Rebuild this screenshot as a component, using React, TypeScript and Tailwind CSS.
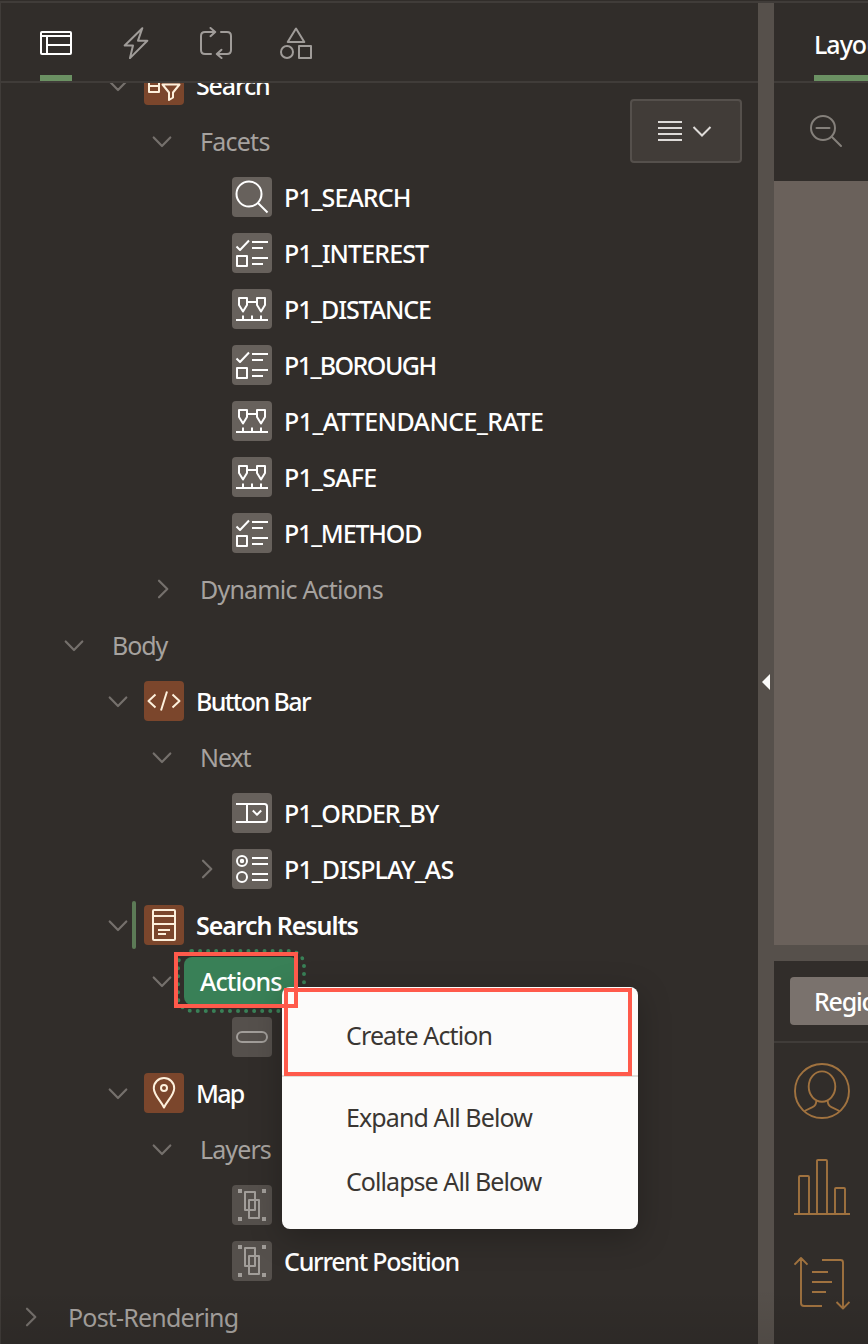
import type { ReactNode } from 'react';
import clsx from 'clsx';

type IconName =
  | 'faceted' | 'search' | 'checklist' | 'range' | 'html' | 'select'
  | 'radio' | 'report' | 'pin' | 'button' | 'layer';

const glyphs: Record<IconName, ReactNode> = {
  faceted: (
    <>
      <path d="M5 9h10v18H5zM5 15h10M5 21h10" />
      <path d="M18.5 19.5h17L29 27.5v5l-4 2.5v-7.5z" />
    </>
  ),
  search: (
    <>
      <circle cx="17" cy="17" r="12.5" />
      <path d="M26 26l9.5 9.5" />
    </>
  ),
  checklist: (
    <>
      <path d="M4.5 13.5L8 17l9-9.5" />
      <path d="M20 9h16M20 15h11M20 25h16M20 31h11M5 23h10v10H5z" />
    </>
  ),
  range: (
    <>
      <path d="M7 9h8v7l-4 6.500-4-6.500zM25 9h8v7l-4 6.500-4-6.500zM15 13h10" />
      <path d="M4 31h32M11 26.500v4.500M20 26.500v4.500M29 26.500v4.500" />
    </>
  ),
  html: <path d="M11.500 13.500L4.500 20l7 6.500M23 10.500l-6 19M28.500 13.500l7 6.500-7 6.500" />,
  select: (
    <>
      <path d="M4 11h28.500q2.500 0 2.500 2.500v13q0 2.500-2.500 2.500H4M15 11v18" />
      <path d="M20.800 17.500l4.200 4.200 4.200-4.200" />
    </>
  ),
  radio: (
    <>
      <circle cx="10" cy="12" r="5" />
      <circle cx="10" cy="12" r="1.200" />
      <circle cx="10" cy="28" r="5" />
      <path d="M20 9h16M20 15h16M20 25h16M20 31h16" />
    </>
  ),
  report: (
    <>
      <rect x="9" y="5" width="22" height="30" rx="1" />
      <path d="M9 11h22M9 19h22M14 25h12M14 29h8" />
    </>
  ),
  pin: (
    <>
      <path d="M20 34.500C17 28 9.800 22 9.800 15.200a10.200 10.200 0 0 1 20.400 0C30.200 22 23 28 20 34.500z" />
      <circle cx="20" cy="15" r="3" />
    </>
  ),
  button: <rect x="5" y="15" width="30" height="10" rx="5" />,
  layer: (
    <>
      <path d="M13 7h10v18H13zM17 15h10v18H17z" />
      <path d="M6 4h4v4H6zM30 4h4v4h-4zM6 32h4v4H6zM30 32h4v4h-4z" fill="currentColor" stroke="none" />
    </>
  ),
};

const tones = {
  region: 'bg-[#7b462c] text-[#fdf0dc]',
  item: 'bg-[#67615c] text-white',
  muted: 'bg-[#55504c] text-[#a19d99]',
};

function Tile({ icon, tone }: { icon: IconName; tone: keyof typeof tones }) {
  return (
    <span className={clsx('size-10 shrink-0 rounded-[4px]', tones[tone])}>
      <svg viewBox="0 0 40 40" className="size-10" fill="none" stroke="currentColor" strokeWidth="2" strokeLinecap="butt" strokeLinejoin="round">
        {glyphs[icon]}
      </svg>
    </span>
  );
}

function Chevron({ open }: { open?: boolean }) {
  return (
    <svg viewBox="0 0 24 24" className="size-6 shrink-0" fill="none" stroke="#75706c" strokeWidth="2.200" strokeLinecap="round" strokeLinejoin="round">
      {open ? <path d="M3.700 8.500l8.300 8.500 8.300-8.500" /> : <path d="M9 3.700l8.300 8.300L9 20.300" />}
    </svg>
  );
}

type Node = {
  label: string;
  indent: string;
  chevron?: 'open' | 'closed';
  icon?: IconName;
  tone?: keyof typeof tones;
  style: string;
  current?: boolean;
};

const item = 'font-medium text-white';
const group = 'text-[#a6a29f]';

const before: Node[] = [
  { label: 'Search', indent: 'pl-[105px]', chevron: 'open', icon: 'faceted', tone: 'region', style: 'font-medium text-white tracking-[-1.15px]' },
  { label: 'Facets', indent: 'pl-[149px]', chevron: 'open', style: `${group} tracking-[-0.75px]` },
  { label: 'P1_SEARCH', indent: 'pl-[193px]', icon: 'search', tone: 'item', style: `${item} tracking-[-0.93px]` },
  { label: 'P1_INTEREST', indent: 'pl-[193px]', icon: 'checklist', tone: 'item', style: `${item} tracking-[-0.91px]` },
  { label: 'P1_DISTANCE', indent: 'pl-[193px]', icon: 'range', tone: 'item', style: `${item} tracking-[-1.12px]` },
  { label: 'P1_BOROUGH', indent: 'pl-[193px]', icon: 'checklist', tone: 'item', style: `${item} tracking-[-1.55px]` },
  { label: 'P1_ATTENDANCE_RATE', indent: 'pl-[193px]', icon: 'range', tone: 'item', style: `${item} tracking-[-0.57px]` },
  { label: 'P1_SAFE', indent: 'pl-[193px]', icon: 'range', tone: 'item', style: `${item} tracking-[-0.75px]` },
  { label: 'P1_METHOD', indent: 'pl-[193px]', icon: 'checklist', tone: 'item', style: `${item} tracking-[-1.18px]` },
  { label: 'Dynamic Actions', indent: 'pl-[149px]', chevron: 'closed', style: `${group} tracking-[-0.8px]` },
  { label: 'Body', indent: 'pl-[61px]', chevron: 'open', style: `${group} tracking-[-1.05px]` },
  { label: 'Button Bar', indent: 'pl-[105px]', chevron: 'open', icon: 'html', tone: 'region', style: `${item} tracking-[-1.6px]` },
  { label: 'Next', indent: 'pl-[149px]', chevron: 'open', style: `${group} tracking-[-1.11px]` },
  { label: 'P1_ORDER_BY', indent: 'pl-[193px]', icon: 'select', tone: 'item', style: `${item} tracking-[-1.02px]` },
  { label: 'P1_DISPLAY_AS', indent: 'pl-[193px]', chevron: 'closed', icon: 'radio', tone: 'item', style: `${item} tracking-[-0.85px]` },
  { label: 'Search Results', indent: 'pl-[105px]', chevron: 'open', icon: 'report', tone: 'region', style: 'font-semibold text-white tracking-[-1.08px]', current: true },
];

const after: Node[] = [
  { label: '', indent: 'pl-[193px]', icon: 'button', tone: 'muted', style: '' },
  { label: 'Map', indent: 'pl-[105px]', chevron: 'open', icon: 'pin', tone: 'region', style: `${item} tracking-[-1.7px]` },
  { label: 'Layers', indent: 'pl-[149px]', chevron: 'open', style: `${group} tracking-[-0.9px]` },
  { label: '', indent: 'pl-[193px]', icon: 'layer', tone: 'muted', style: '' },
  { label: 'Current Position', indent: 'pl-[193px]', icon: 'layer', tone: 'muted', style: 'font-medium text-white tracking-[-1.25px]' },
  { label: 'Post-Rendering', indent: 'pl-[17px]', chevron: 'closed', style: `${group} tracking-[-0.8px]` },
];

function Row({ node }: { node: Node }) {
  return (
    <div className={clsx('relative flex h-14 shrink-0 items-center', node.indent)}>
      {node.current && <span className="absolute left-[131px] top-1 h-12 w-1 rounded-[2px] bg-[#5c7a56]" />}
      {node.chevron ? <Chevron open={node.chevron === 'open'} /> : <span className="w-6 shrink-0" />}
      {node.icon && node.tone ? (
        <span className="mr-3 ml-3.5 flex"><Tile icon={node.icon} tone={node.tone} /></span>
      ) : (
        <span className="w-[26px] shrink-0" />
      )}
      <span className={clsx('leading-[56px] whitespace-nowrap', node.style)}>{node.label}</span>
    </div>
  );
}

function ContextMenu() {
  const entry = 'flex h-16 items-center whitespace-nowrap pl-16 pt-0.5';
  return (
    <div className="absolute left-[281px] top-[34px] z-20 h-[242px] w-[356px] rounded-lg bg-[#fcfbfa] py-4 text-[#3a3632] shadow-[0_8px_32px_rgba(0,0,0,0.25)]">
      <div className={clsx(entry, 'tracking-[-0.87px]')}>Create Action</div>
      <div className="my-2 h-0.5 bg-[#dfdcd9]" />
      <div className={clsx(entry, 'tracking-[-0.9px]')}>Expand All Below</div>
      <div className={clsx(entry, 'tracking-[-0.94px]')}>Collapse All Below</div>
    </div>
  );
}

function SelectedRow() {
  return (
    <div className="relative flex h-14 shrink-0 items-center pl-[149px]">
      <Chevron open />
      <span className="ml-2.5 h-12 w-[114px] rounded-lg bg-[#398057] pl-4 font-medium leading-[48px] tracking-[-0.95px] text-white outline-4 outline-offset-4 outline-dotted outline-[#398057]">
        Actions
      </span>
      <ContextMenu />
      <span className="absolute left-[173px] top-[-1px] z-30 h-14 w-[124px] border-4 border-[#ff5a4b]" />
      <span className="absolute left-[283px] top-[35px] z-30 h-[88px] w-[348px] border-4 border-[#ff5a4b]" />
    </div>
  );
}

function ToolIcon({ children, className }: { children: ReactNode; className?: string }) {
  return (
    <svg viewBox="0 0 32 32" className={clsx('size-8', className)} fill="none" stroke="currentColor" strokeWidth="2" strokeLinejoin="round" strokeLinecap="round">
      {children}
    </svg>
  );
}

function Toolbar() {
  return (
    <div className="flex h-20 shrink-0 gap-12 border-b-2 border-[#403c39] pl-[39px] text-[#a09c99]">
      <div className="flex w-8 flex-col justify-between pt-6 text-white">
        <ToolIcon><path d="M2 5h28q1 0 1 1v20q0 1-1 1H2q-1 0-1-1V6q0-1 1-1zM1 9h30M7 9v18M7 18h24" /></ToolIcon>
        <span className="h-1.5 bg-[#6b9163]" />
      </div>
      <ToolIcon className="mt-6"><path d="M22.300 1.200L4.700 18.500H13l-3 12.600L27.300 13.700H18z" /></ToolIcon>
      <ToolIcon className="mt-6">
        <path d="M11 27H5q-4 0-4-4V9q0-4 4-4h10M10.500 1l4.700 4-4.700 4.200" />
        <path d="M21 5h6q4 0 4 4v14q0 4-4 4H17M21.500 22.800L16.800 27l4.700 4" />
      </ToolIcon>
      <ToolIcon className="mt-6">
        <path d="M16 1.500L7.700 15h16.600zM19 19h12v12H19z" />
        <circle cx="7" cy="25" r="6" />
      </ToolIcon>
    </div>
  );
}

function PaletteIcon({ children }: { children: ReactNode }) {
  return (
    <svg viewBox="0 0 56 56" className="size-14" fill="none" stroke="#a0723f" strokeWidth="1.900" strokeLinejoin="round">
      {children}
    </svg>
  );
}

export default function App() {
  return (
    <div className="relative flex h-[1344px] w-[868px] flex-col overflow-hidden bg-[#312d2a] pt-px font-['Noto_Sans',sans-serif] text-[25px]">
      <div className="h-0.5 shrink-0 bg-[#403c39]" />
      <div className="flex min-h-0 flex-1">
        <section className="relative flex w-[758px] shrink-0 flex-col border-l border-[#403c39]">
          <Toolbar />
          <div className="min-h-0 flex-1 overflow-hidden">
            <div className="-mt-[26px] flex flex-col">
              {before.map((n, i) => <Row key={i} node={n} />)}
              <SelectedRow />
              {after.map((n, i) => <Row key={i} node={n} />)}
            </div>
          </div>
          <button className="absolute right-4 top-24 flex h-16 w-28 items-center rounded-[4px] border-2 border-[#55504c] bg-[#413c38] pl-[26px] text-[#dedbd8]">
            <svg viewBox="0 0 54 24" className="h-6 w-[54px]" fill="none" stroke="currentColor" strokeWidth="2">
              <path d="M0 3h24M0 9h24M0 15h24M0 21h24M35.500 8l8.500 8.500L52.500 8" />
            </svg>
          </button>
        </section>

        <div className="flex w-4 shrink-0 items-center justify-end bg-[#56504b] pr-1">
          <svg viewBox="0 0 8 16" className="mt-[17px] h-4 w-2"><path d="M8 0v16L0 8z" fill="#fcfbfa" /></svg>
        </div>

        <section className="flex min-w-0 flex-1 flex-col overflow-hidden">
          <div className="flex h-20 shrink-0 border-b-2 border-[#403c39] pl-10">
            <div className="flex shrink-0 flex-col justify-between font-medium tracking-[-1px] text-white">
              <span className="leading-[82px]">Layout</span>
              <span className="-mt-[10px] h-1.5 bg-[#6b9163]" />
            </div>
          </div>
          <div className="h-[98px] shrink-0 pl-[35px] pt-[31px] text-[#85807b]">
            <svg viewBox="0 0 34 34" className="size-[34px]" fill="none" stroke="currentColor" strokeWidth="2" strokeLinecap="round">
              <circle cx="14" cy="14" r="12" />
              <path d="M7.500 14h13M23 23l9 9" />
            </svg>
          </div>
          <div className="h-[764px] shrink-0 bg-[#6a615b]" />
          <div className="h-4 shrink-0 bg-[#56504b]" />
          <div className="h-[82px] shrink-0 border-b-2 border-[#403c39] pl-4 pt-4">
            <div className="h-12 w-32 rounded-[4px] bg-[#7a726d] pl-6 font-medium leading-[48px] tracking-[-1.2px] text-white">Regions</div>
          </div>
          <div className="flex flex-col gap-10 pl-5 pt-5">
            <PaletteIcon>
              <circle cx="28" cy="28" r="27" />
              <ellipse cx="28" cy="23.600" rx="13.300" ry="15.200" />
              <path d="M22.300 38c0 4-1.500 5-3.800 6.200l-8 3.800M33.700 38c0 4 1.500 5 3.800 6.200l8 3.800" />
            </PaletteIcon>
            <PaletteIcon>
              <path d="M0 55h56M5 55V18q0-1 1-1h8q1 0 1 1v37M23 55V2q0-1 1-1h8q1 0 1 1v53M41 55V30q0-1 1-1h8q1 0 1 1v25" />
            </PaletteIcon>
            <PaletteIcon>
              <path d="M.500 9.700L7 3l6.500 6.700M7 3v45q0 3 3 3h18M28 5h18.500q2.500 0 2.500 2.500V53.500M42.500 47l6.500 6.500 6.500-6.500M18 17h16M18 27h20M18 37h14" />
            </PaletteIcon>
          </div>
        </section>
      </div>
      <div className="pointer-events-none absolute inset-x-0 bottom-0 h-14 bg-linear-to-b from-transparent to-black/8" />
    </div>
  );
}
